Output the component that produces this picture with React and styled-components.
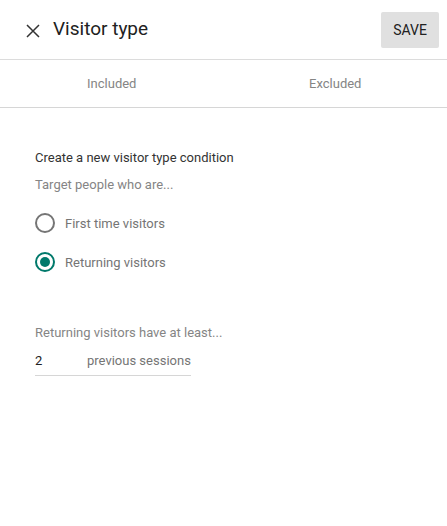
import React, { useState } from 'react';
import styled, { createGlobalStyle } from 'styled-components';

const GlobalStyle = createGlobalStyle`
    body {
        margin: 0;
        background: #fff;
        font-family: Roboto, "Noto Sans", Arial, sans-serif;
    }
`

const Panel = styled.div`
    width: 447px;
    height: 526px;
    background: #fff;
`

const Header = styled.header`
    height: 60px;
    display: flex;
    align-items: center;
    padding: 0 8px 0 26px;
    border-bottom: 1px solid #dcdcdc;
    box-sizing: border-box;
`

const CloseButton = styled.button`
    width: 14px;
    height: 14px;
    padding: 0;
    border: none;
    background: none;
    display: flex;
    margin-top: 3px;
    cursor: pointer;
`

const Title = styled.h1`
    flex: 1;
    margin: 0 0 2px 13px;
    font-size: 19px;
    font-weight: 400;
    color: #212121;
`

const SaveButton = styled.button`
    width: 58px;
    height: 36px;
    border: none;
    border-radius: 2px;
    background: #e0e0e0;
    color: #212121;
    font-family: inherit;
    font-size: 14px;
    font-weight: 400;
    cursor: pointer;
`

const Tabs = styled.nav`
    display: grid;
    grid-template-columns: 1fr 1fr;
    height: 48px;
    border-bottom: 1px solid #d6d6d6;
    box-sizing: border-box;
`

const Tab = styled.div`
    display: flex;
    align-items: center;
    justify-content: center;
    font-size: 13px;
    color: ${(props) => (props.active ? "#212121" : "#858585")};
`

const Content = styled.section`
    padding: 42px 35px 0;
`

const Heading = styled.p`
    margin: 0;
    font-size: 13px;
    line-height: 16px;
    color: #333;
`

const Hint = styled.p`
    margin: ${(props) => props.top || 0}px 0 0;
    font-size: 13px;
    line-height: 16px;
    color: #858585;
`

const Options = styled.div`
    display: flex;
    flex-direction: column;
    gap: 19px;
    margin-top: 20px;
`

const Option = styled.label`
    display: flex;
    align-items: center;
    gap: 10px;
    height: 20px;
    font-size: 13px;
    color: #757575;
    cursor: pointer;
`

const Radio = styled.span`
    width: 20px;
    height: 20px;
    border-radius: 50%;
    border: 2px solid ${(props) => (props.checked ? "#00796b" : "#757575")};
    box-sizing: border-box;
    display: flex;
    align-items: center;
    justify-content: center;

    &::after {
        content: "";
        width: 10px;
        height: 10px;
        border-radius: 50%;
        background: #00796b;
        display: ${(props) => (props.checked ? "block" : "none")};
    }
`

const SessionRow = styled.div`
    display: flex;
    align-items: center;
    width: 156px;
    height: 30px;
    margin-top: 5px;
    border-bottom: 1px solid #d6d6d6;
    box-sizing: border-box;
`

const Count = styled.input`
    width: 52px;
    border: none;
    padding: 0;
    outline: none;
    font-family: inherit;
    font-size: 13px;
    color: #212121;
    background: none;
`

const Unit = styled.span`
    font-size: 13px;
    color: #757575;
`

const CloseIcon = () => (
    <svg width="14" height="14" viewBox="0 0 14 14">
        <path d="M1 1 L13 13 M13 1 L1 13" stroke="#333" strokeWidth="1.5" />
    </svg>
)

const App = () => {
    const [type, setType] = useState("returning");
    const [count, setCount] = useState("2");

    return (
        <Panel>
            <GlobalStyle />
            <Header>
                <CloseButton><CloseIcon /></CloseButton>
                <Title>Visitor type</Title>
                <SaveButton>SAVE</SaveButton>
            </Header>
            <Tabs>
                <Tab>Included</Tab>
                <Tab>Excluded</Tab>
            </Tabs>
            <Content>
                <Heading>Create a new visitor type condition</Heading>
                <Hint top={11}>Target people who are...</Hint>
                <Options>
                    <Option onClick={() => setType("first")}>
                        <Radio checked={type === "first"} />
                        First time visitors
                    </Option>
                    <Option onClick={() => setType("returning")}>
                        <Radio checked={type === "returning"} />
                        Returning visitors
                    </Option>
                </Options>
                <Hint top={53}>Returning visitors have at least...</Hint>
                <SessionRow>
                    <Count value={count} onChange={(e) => setCount(e.target.value)} />
                    <Unit>previous sessions</Unit>
                </SessionRow>
            </Content>
        </Panel>
    )
};

export default App;
